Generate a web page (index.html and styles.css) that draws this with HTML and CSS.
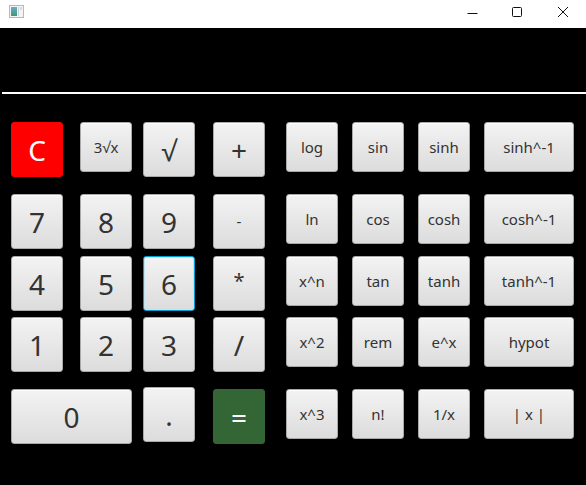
FILE: index.html
```html
<!DOCTYPE html>
<html lang="en">
<head>
<meta charset="utf-8">
<title>Calculator</title>
<link rel="stylesheet" href="styles.css">
</head>
<body>
<div class="window">
  <div class="titlebar">
    <svg class="app-icon" width="15" height="13" viewBox="0 0 15 13">
      <defs>
        <linearGradient id="g" x1="0" y1="0" x2="0" y2="1">
          <stop offset="0" stop-color="#6fa8d6"/>
          <stop offset="1" stop-color="#3f9a6a"/>
        </linearGradient>
      </defs>
      <rect x="0.5" y="0.5" width="14" height="12" fill="#f4f4f4" stroke="#b8b8b8"/>
      <rect x="2" y="2" width="6" height="9" fill="url(#g)"/>
      <rect x="9" y="2" width="1" height="9" fill="#c9d3dc"/>
      <rect x="11" y="2" width="2" height="3" fill="#cfe0cf"/>
    </svg>
    <div class="controls">
      <svg class="ctl" width="46" height="28" viewBox="0 0 46 28"><path d="M17.5 13.5h10" stroke="#111" stroke-width="1"/></svg>
      <svg class="ctl" width="46" height="28" viewBox="0 0 46 28"><rect x="18.5" y="7.5" width="9" height="9" rx="1" fill="none" stroke="#111" stroke-width="1"/></svg>
      <svg class="ctl" width="46" height="28" viewBox="0 0 46 28"><path d="M18 7l10 10M28 7l-10 10" stroke="#111" stroke-width="1"/></svg>
    </div>
  </div>
  <div class="display"></div>
  <div class="pad">
    <button class="key big clear">C</button>
    <button class="key small">3√x</button>
    <button class="key big">√</button>
    <button class="key big">+</button>
    <button class="key small">log</button>
    <button class="key small">sin</button>
    <button class="key small">sinh</button>
    <button class="key small wide">sinh^-1</button>

    <button class="key big">7</button>
    <button class="key big">8</button>
    <button class="key big">9</button>
    <button class="key big minus">-</button>
    <button class="key small">ln</button>
    <button class="key small">cos</button>
    <button class="key small">cosh</button>
    <button class="key small wide">cosh^-1</button>

    <button class="key big">4</button>
    <button class="key big">5</button>
    <button class="key big focus">6</button>
    <button class="key big star">*</button>
    <button class="key small">x^n</button>
    <button class="key small">tan</button>
    <button class="key small">tanh</button>
    <button class="key small wide">tanh^-1</button>

    <button class="key big">1</button>
    <button class="key big">2</button>
    <button class="key big">3</button>
    <button class="key big">/</button>
    <button class="key small">x^2</button>
    <button class="key small">rem</button>
    <button class="key small">e^x</button>
    <button class="key small wide">hypot</button>

    <button class="key big zero">0</button>
    <button class="key big dot">.</button>
    <button class="key big equals">=</button>
    <button class="key small">x^3</button>
    <button class="key small">n!</button>
    <button class="key small">1/x</button>
    <button class="key small wide">| x |</button>
  </div>
</div>
</body>
</html>
```

FILE: styles.css
```css
* { box-sizing: border-box; }
html, body {
  margin: 0;
  padding: 0;
  background: #000;
  width: 586px;
  height: 485px;
  overflow: hidden;
}
.window {
  width: 586px;
  height: 485px;
  background: #000;
  font-family: "Noto Sans", "Open Sans", sans-serif;
}
.titlebar {
  height: 28px;
  background: #fff;
  display: flex;
  align-items: flex-start;
  justify-content: space-between;
}
.app-icon {
  margin: 5px 0 0 9px;
  display: block;
}
.controls {
  display: flex;
}
.ctl {
  display: block;
}
.controls .ctl:first-child { margin-right: -2px; }
.display {
  height: 66px;
  margin-left: 2px;
  background: #000;
  border-bottom: 2px solid #fff;
}
.pad {
  display: grid;
  grid-template-columns: 69px 63px 70px 73px 66px 66px 66px 90px;
  grid-template-rows: 72px 62px 61px 72px 55px;
  padding: 28px 0 0 11px;
}
.key {
  width: 52px;
  height: 50px;
  justify-self: start;
  align-self: start;
  display: flex;
  align-items: center;
  justify-content: center;
  padding: 0;
  margin: 0;
  border: 1px solid #a9a9a9;
  border-radius: 3px;
  background: linear-gradient(#f3f3f3, #dcdcdc);
  box-shadow: inset 0 1px 0 rgba(255,255,255,0.8);
  color: #333;
  font-family: "Noto Sans", "Open Sans", sans-serif;
  font-size: 15px;
  font-weight: normal;
  line-height: 1;
}
.key.big {
  height: 55px;
  font-size: 28px;
}
.key.wide { width: 90px; }
.key.minus { font-size: 15px; }
.key.star { font-size: 20px; padding-bottom: 6px; }
.key.clear {
  background: #ff0000;
  border-color: #ff0000;
  box-shadow: none;
  color: #fff;
}
.key.equals {
  background: #346534;
  border-color: #346534;
  box-shadow: none;
  color: #fff;
}
.key.focus {
  border-color: #039ed3;
  box-shadow: inset 0 0 0 1px #bfe3f1;
}
.key.zero {
  grid-column: span 2;
  width: 121px;
}
.key.dot { margin-top: -2px; }
```
